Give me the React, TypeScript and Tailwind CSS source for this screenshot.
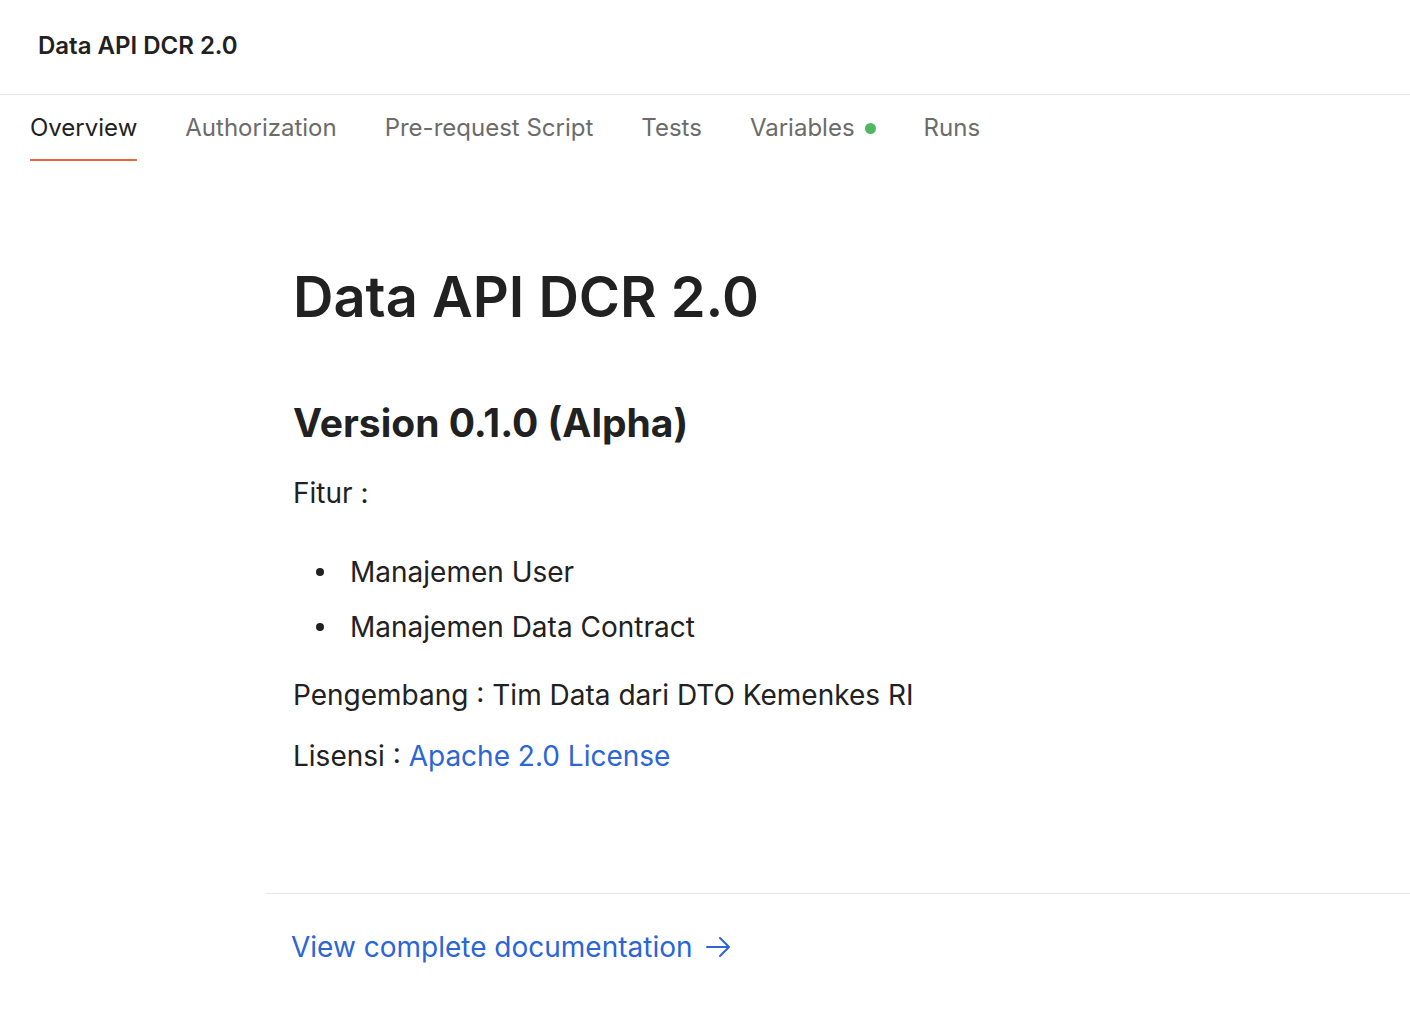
export default function App() {
  const tabs = ["Overview", "Authorization", "Pre-request Script", "Tests", "Variables", "Runs"]
  return (
    <div className="min-h-screen bg-white text-[#212121]" style={{ fontFamily: "Inter, 'Noto Sans', sans-serif" }}>
      <header className="h-[95px] flex items-center pl-[38px] pb-[2px] border-b border-[#e6e6e6]">
        <h1 className="text-[24px] font-semibold">Data API DCR 2.0</h1>
      </header>

      <nav className="flex gap-[48px] pl-[30px] pt-[2px]">
        {tabs.map((t, i) => (
          <div
            key={t}
            className={
              i === 0
                ? "h-[64px] flex items-center gap-[10px] text-[24px] text-[#212121] border-b-2 border-[#e8673b]"
                : "h-[64px] flex items-center gap-[10px] text-[24px] text-[#6b6b6b] border-b-2 border-transparent"
            }
          >
            {t}
            {t === "Variables" && <span className="w-[11px] h-[11px] rounded-full bg-[#4fb862]" />}
          </div>
        ))}
      </nav>

      <main className="pl-[266px] pt-[102px]">
        <div className="pl-[27px] pb-[117px]">
          <h2 className="text-[56px] leading-[68px] font-semibold">Data API DCR 2.0</h2>
          <h3 className="mt-[68px] text-[39px] leading-[48px] font-bold">Version 0.1.0 (Alpha)</h3>
          <p className="mt-[26px] text-[28px] leading-[40px]">Fitur :</p>
          <ul className="mt-[39px] pl-[23px] flex flex-col gap-[15px] text-[28px] leading-[40px]">
            <li className="flex items-center gap-[26px]">
              <span className="w-[8px] h-[8px] rounded-full bg-[#212121]" />
              Manajemen User
            </li>
            <li className="flex items-center gap-[26px]">
              <span className="w-[8px] h-[8px] rounded-full bg-[#212121]" />
              Manajemen Data Contract
            </li>
          </ul>
          <p className="mt-[28px] text-[28px] leading-[40px]">Pengembang : Tim Data dari DTO Kemenkes RI</p>
          <p className="mt-[21px] text-[28px] leading-[40px]">
            Lisensi : <a className="text-[#2b65d6]">Apache 2.0 License</a>
          </p>
        </div>
        <div className="border-t border-[#e6e6e6] pt-[33px] pl-[25px]">
          <a className="inline-flex items-center gap-[12px] text-[28px] leading-[40px] text-[#2b65d6]">
            View complete documentation
            <svg width="26" height="26" viewBox="0 0 26 26" fill="none" stroke="currentColor" strokeWidth="2" strokeLinecap="round" strokeLinejoin="round">
              <path d="M2 13h22M15 4l9 9-9 9" />
            </svg>
          </a>
        </div>
      </main>
    </div>
  )
}
